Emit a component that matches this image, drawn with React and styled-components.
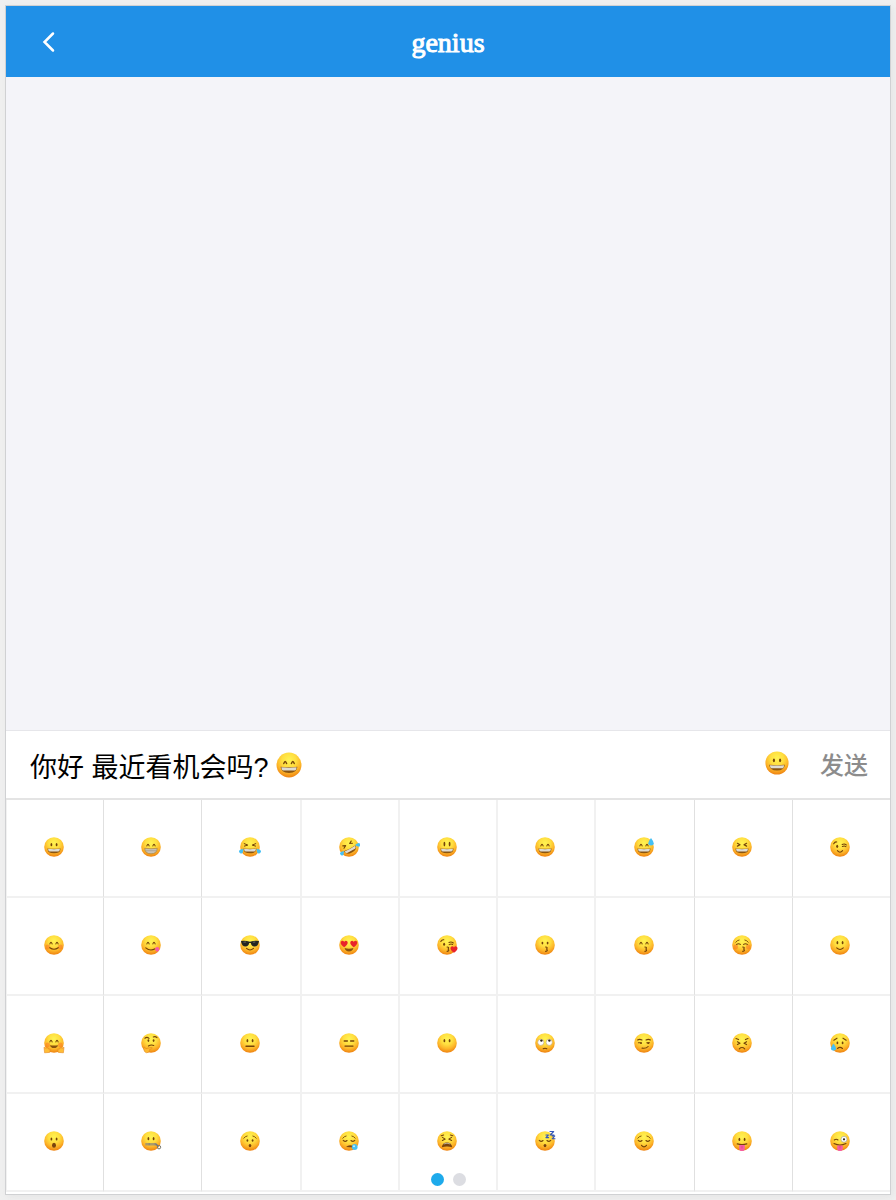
import React, { useState } from "react";
import styled, { createGlobalStyle } from "styled-components";

const GlobalStyle = createGlobalStyle`
  * { box-sizing: border-box; }
  body {
    margin: 0;
    background: #f0f0f0;
    font-family: "Liberation Sans", "Noto Sans CJK SC", sans-serif;
  }
  button, input { font: inherit; }
`;

const Page = styled.div`
  min-height: 100vh;
  padding: 5px;
  display: flex;
`;

const Phone = styled.main`
  flex: 1;
  min-width: 0;
  display: flex;
  flex-direction: column;
  background: #fff;
  border: 1px solid #d0d1d3;
  box-shadow: 2px 2px 8px #e4e4e4;
`;

const Header = styled.header`
  display: grid;
  grid-template-columns: 84px 1fr 84px;
  align-items: center;
  height: 71px;
  background: #2090e7;
  color: #fff;
`;

const BackButton = styled.button`
  display: flex;
  justify-content: center;
  padding: 12px;
  border: 0;
  background: none;
  color: inherit;
  cursor: pointer;
`;

const Title = styled.h1`
  margin: 0;
  padding-top: 2px;
  text-align: center;
  font: 400 28px/32px "Liberation Serif", serif;
  -webkit-text-stroke: 1px #fff;
`;

const Messages = styled.section`
  flex: 1;
  min-height: 120px;
  background: #f4f4f9;
`;

const Composer = styled.form`
  display: flex;
  align-items: center;
  gap: 30px;
  height: 68px;
  padding: 0 22px 0 24px;
  border-top: 1px solid #e6e6ea;
`;

const Draft = styled.div`
  flex: 1;
  min-width: 0;
  display: flex;
  align-items: center;
  gap: 6px;
  overflow: hidden;
`;

const DraftInput = styled.input`
  field-sizing: content;
  min-width: 1px;
  max-width: 100%;
  height: 40px;
  padding: 2px 0 0;
  border: 0;
  outline: 0;
  background: none;
  color: #000;
  font-size: 27px;
  line-height: 36px;
`;

const EmojiToggle = styled.button`
  display: flex;
  padding: 0 0 4px;
  border: 0;
  background: none;
  cursor: pointer;
`;

const SendButton = styled.button`
  padding: 2px 0 0;
  border: 0;
  background: none;
  color: #8c8c8c;
  font-size: 24px;
  font-weight: 500;
  line-height: 32px;
  cursor: pointer;
`;

const Picker = styled.section`
  position: relative;
  padding-bottom: 2px;
  border-top: 2px solid #e4e4e4;
`;

const EmojiGrid = styled.div`
  display: grid;
  grid-template-columns: 97fr 98fr 100fr 98fr 98fr 98fr 99fr 98fr 97fr;
  grid-auto-rows: 98px;
  border-left: 1px solid #f1f1f1;
`;

const EmojiCell = styled.button`
  display: flex;
  align-items: center;
  justify-content: center;
  min-width: 0;
  padding: 0 3px 2px 0;
  border: 0 solid #f1f1f1;
  border-bottom-width: 2px;
  border-right: ${(p) =>
    p.$column === 8 ? "0" : p.$column > 1 && p.$column < 6 ? "2px solid #f1f1f1" : "1px solid #e0e0e0"};
  background: #fff;
  cursor: pointer;
`;

const Dots = styled.div`
  position: absolute;
  left: 0;
  right: 0;
  bottom: 8px;
  display: flex;
  justify-content: center;
  gap: 9px;
  pointer-events: none;
`;

const Dot = styled.button`
  width: 13px;
  height: 13px;
  padding: 0;
  border: 0;
  border-radius: 50%;
  background: ${(p) => (p.$active ? "#1eaaeb" : "#dcdde2")};
  pointer-events: auto;
  cursor: pointer;
`;

const Glyph = styled.svg`
  flex-shrink: 0;
`;

const Defs = styled.svg`
  position: absolute;
`;

const INK = "#754308";
const line = { fill: "none", stroke: INK, strokeWidth: 1.1, strokeLinecap: "round", strokeLinejoin: "round" };
const L = ({ d, w = 1.1, c = INK }) => <path d={d} {...line} strokeWidth={w} stroke={c} />;

const DotEyes = ({ y = -2.3, x = 2.6, ry = 1.6 }) => (
  <g fill={INK}>
    <ellipse cx={-x} cy={y} rx="0.9" ry={ry} />
    <ellipse cx={x} cy={y} rx="0.9" ry={ry} />
  </g>
);
const HappyEyes = () => <L d="M-4.1 -1.1Q-3 -4.3 -1.9 -1.1M1.9 -1.1Q3 -4.3 4.1 -1.1" />;
const Squint = () => <L d="M-4.6 -3.7L-2 -2.3L-4.6 -.9M4.6 -3.7L2 -2.3L4.6 -.9" w={1.2} />;
const ClosedEyes = () => <L d="M-5.8 -.7Q-3.8 1.2 -2 -.5M2 -.5Q3.8 1.2 5.8 -.7" />;
const Brows = () => <L d="M-6.2 -2.8Q-4.8 -4.9 -2.9 -5M6.2 -2.8Q4.8 -4.9 2.9 -5" w={0.9} />;
const Grin = () => (
  <g>
    <path d="M-6.6 1.4Q0 2.2 6.6 1.4Q6.4 6.2 0 6.3Q-6.4 6.2 -6.6 1.4Z" fill="#8b5410" />
    <path d="M-6 1.8Q0 2.5 6 1.8Q5.8 4.4 4.4 4.4H-4.4Q-5.8 4.4 -6 1.8Z" fill="#dedbd2" />
  </g>
);
const Teeth = () => (
  <g>
    <path d="M-6.3 1.3Q0 2.1 6.3 1.3Q5.9 6.8 0 6.8Q-5.9 6.8 -6.3 1.3Z" fill="#c9c2b3" stroke="#a27731" strokeWidth=".6" />
    <path d="M-5.6 3.7H5.6" stroke="#988f7e" strokeWidth=".5" />
  </g>
);
const Smile = ({ w = 3.4, y = 3.4 }) => <L d={`M${-w} ${y}Q0 ${y + 3.2} ${w} ${y}`} />;
const Blush = () => (
  <g fill="#fb6b22" opacity=".45">
    <circle cx="-6.3" cy="2" r="2.4" />
    <circle cx="6.3" cy="2" r="2.4" />
  </g>
);
const Kiss = ({ x = 1.5 }) => (
  <path d={`M${x - 0.9} 2Q${x + 1.6} 2 ${x + 0.1} 4.1Q${x + 2} 5.8 ${x - 0.9} 6.4`} {...line} />
);
const Heart = ({ x, y, s = 1 }) => (
  <path
    transform={`translate(${x} ${y}) scale(${s})`}
    d="M0 3.2C-5 0 -3.4 -3 -1.6 -3C-.6 -3 0 -2 0 -1.6C0 -2 .6 -3 1.6 -3C3.4 -3 5 0 0 3.2Z"
    fill="#e9232b"
  />
);
const Tear = ({ x, y, s = 1, r = 0 }) => (
  <path transform={`translate(${x} ${y}) rotate(${r}) scale(${s})`} d="M0 -3.6Q5 2.8 0 3.1Q-5 2.8 0 -3.6Z" fill="#45c0f5" />
);

const FEATURES = {
  grinning: <><DotEyes /><Grin /></>,
  beaming: <><HappyEyes /><Teeth /></>,
  joy: (
    <><L d="M-5.8 -3.4L-2.2 -1.9L-5.6 -.9M5.8 -3.4L2.2 -1.9L5.6 -.9" w={1} /><Grin />
      <Tear x={-8.5} y={4} s={0.8} r={40} /><Tear x={8.5} y={4} s={0.8} r={-40} /></>
  ),
  rofl: (
    <g transform="rotate(-28)"><L d="M-5 -3.9L-2.3 -2.8L-5 -1.3M4.7 -4.2L2.2 -2.8L4.8 -1.7" /><Grin />
      <Tear x={-8.8} y={2.2} s={0.75} r={65} /><Tear x={8.8} y={2.2} s={0.75} r={-65} /></g>
  ),
  smiley: <><DotEyes y={-2.9} ry={2.3} /><Grin /></>,
  smile: <><HappyEyes /><Grin /></>,
  sweat: <><HappyEyes /><Grin /><Tear x={7} y={-5} s={1.1} /></>,
  laughing: <><Squint /><Grin /></>,
  wink: <><L d="M-6.3 -3.2Q-5 -5.6 -3.3 -5M2.2 -2.6Q4.5 -3.7 6.3 -2.1M2.4 -.5Q4.3 -1.6 5.9 -.4" /><ellipse cx="-2.8" cy="-.7" rx="1" ry="1.6" fill={INK} /><Smile w={2.6} y={3.6} /></>,
  blush: <><Blush /><HappyEyes /><Smile w={4.2} y={2.7} /></>,
  yum: <><HappyEyes /><L d="M-5.2 2.8Q-1 6.6 4.2 3.8" /><path d="M4 3.4Q6.4 .8 8 3Q9.2 5.5 6.2 6.8Q4.6 6.7 4 3.4Z" fill="#f75aa5" /></>,
  cool: <><path d="M-9 -4.1Q-4.5 -4.8 0 -3.3Q4.5 -4.8 9 -4.1Q8.4 1.6 4.3 1.6Q1.4 1.2 .8 -1.9H-.8Q-1.4 1.2 -4.3 1.6Q-8.4 1.6 -9 -4.1Z" fill="#242522" /><path d="M-6.5 -2.8L-3.8 -3M2.9 -2.8L5.3 -3" stroke="#7b7b74" strokeWidth=".8" /><Smile w={3.5} /></>,
  heartEyes: <><Heart x={-4.8} y={-1} s={1.05} /><Heart x={4.8} y={-1} s={1.05} /><path d="M-4.4 3.1Q0 4.2 4.4 3.1Q3.7 6.5 0 6.5Q-3.7 6.5 -4.4 3.1Z" fill="#89530e" /></>,
  blowKiss: <><L d="M-6.2 -3.5Q-5 -5.7 -3.2 -5.2M2 -2.5Q4.2 -3.6 6.3 -2M2.2 -.4Q4 -1.5 5.6 -.6" /><ellipse cx="-2.9" cy="-.7" rx="1" ry="1.5" fill={INK} /><Kiss x={1} /><Heart x={7} y={4.5} s={1.05} /></>,
  kiss: <><DotEyes y={-1.9} ry={1.3} /><Kiss /></>,
  kissSmile: <><HappyEyes /><Kiss x={1.8} /></>,
  kissClosed: <><Blush /><Brows /><L d="M-5.4 -.6Q-3.5 -2 -1.6 -.6M1.6 -.6Q3.5 -2 5.4 -.6" /><Kiss x={1.6} /></>,
  slight: <><DotEyes /><Smile w={3.3} y={2.9} /></>,
  hug: (
    <><Blush /><HappyEyes /><path d="M-4 2.2Q0 3 4 2.2Q3.4 5 0 5Q-3.4 5 -4 2.2Z" fill="#89530e" />
      <g fill="#ffbd36" stroke="#e88a22" strokeWidth=".6"><path d="M-10 4.2L-8 5.6L-6.8 4.3L-5.7 6L-3.8 6.3L-4.3 9.4L-9.4 9.8Z" /><path d="M10 4.2L8 5.6L6.8 4.3L5.7 6L3.8 6.3L4.3 9.4L9.4 9.8Z" /></g></>
  ),
  thinking: <><L d="M-6.1 -4.8Q-4 -6.5 -2 -4.7M2.3 -6Q4.3 -7.1 6 -5.3" /><DotEyes y={-2.4} ry={1.4} /><L d="M-2.6 3Q0 1.4 2.8 2.4" /><path d="M-7.2 4.3Q-5.9 3.7 -5.2 5.7L.8 4.3Q2 4.9 .6 5.8L-1.4 6.5Q-1.1 9.6 -4.2 9.8Q-7.5 9.3 -7.2 4.3Z" fill="#ffb92e" stroke="#df861b" strokeWidth=".6" /></>,
  neutral: <><DotEyes /><L d="M-4 3.2H4" w={1.4} /></>,
  expressionless: <><L d="M-4.8 -2H-1.6M1.6 -2H4.8M-4 3.1H4" w={1.3} /></>,
  noMouth: <DotEyes />,
  rollEyes: <><g fill="#fff" stroke="#b5936a" strokeWidth=".5"><circle cx="-4.2" cy="-.7" r="3.1" /><circle cx="4.2" cy="-.7" r="3.1" /></g><circle cx="-3.6" cy="-2.4" r="1.2" fill="#32251a" /><circle cx="4.4" cy="-2.4" r="1.2" fill="#32251a" /><L d="M-1.8 5.7Q0 4.7 1.8 5.7" /></>,
  smirk: <><L d="M-6.4 -3Q-4.4 -4.3 -2 -3M2 -3Q4.4 -4.3 6.4 -3M-5.6 -.3L-2.7 -.2M2.8 -.2L5.6 -.3" /><circle cx="-3" cy=".2" r=".9" fill={INK} /><circle cx="4.2" cy=".2" r=".9" fill={INK} /><L d="M-2 5.1Q2.2 5.7 4.1 3.5" /></>,
  persevere: <><L d="M-6 -4.4L-3.4 -3.4M6 -4.4L3.4 -3.4M-4.6 -1.3L-2 .2L-4.6 1.6M4.6 -1.3L2 .2L4.6 1.6M-2.7 5.8Q0 3.2 2.7 5.8" /></>,
  sadRelieved: <><L d="M-6.2 -2.8L-3 -4.8M6.2 -2.8L3 -4.8M-2.5 5.5Q0 3.2 2.5 5.5" /><DotEyes y={-0.1} ry={1.3} /><Tear x={-6.5} y={4.4} s={1.05} /></>,
  open: <><DotEyes y={-2} /><ellipse cy="4.2" rx="2" ry="2.5" fill="#7a430d" /></>,
  zipper: <><DotEyes /><path d="M-5.5 3.2H5.5" stroke="#878680" strokeWidth="2.5" strokeDasharray=".9 .3" /><circle cx="8" cy="6.2" r="1.7" fill="none" stroke="#77776f" strokeWidth="1" /><path d="M5 3L7 5.3" stroke="#777" strokeWidth="1.6" /></>,
  hushed: <><Brows /><DotEyes y={-0.5} ry={1.2} /><ellipse cy="4.6" rx="1.3" ry="1.6" fill="#7a430d" /></>,
  sleepy: <><Brows /><ClosedEyes /><path d="M-3 6.1Q0 3.2 4 5V6.6Z" fill="#7a430d" /><circle cx="5.7" cy="6" r="2.9" fill="#49bfef" /><circle cx="5" cy="5.2" r="1" fill="#c5f0ff" /></>,
  tired: <><L d="M-5.8 -5.2L-3.4 -6M5.8 -5.2L3.4 -6M-4.6 -3.6L-1.8 -1.9L-4.6 -.6M4.6 -3.6L1.8 -1.9L4.6 -.6" /><path d="M-5.2 6.2Q-4.6 1.5 0 1.5Q4.6 1.5 5.2 6.2Q0 4.8 -5.2 6.2Z" fill="#7a430d" /><path d="M-3.3 3Q0 1.4 3.3 3" stroke="#bcae98" strokeWidth="1" fill="none" /></>,
  sleeping: <><ClosedEyes /><ellipse cy="4.6" rx="1.4" ry="1.7" fill="#7a430d" /><L c="#3558b9" d="M.9 -6H3.4L.9 -3.4H3.6M5 -9.5H8.7L5.2 -6H9M7.2 -5H9.8L7.2 -2.2H10" /></>,
  relieved: <><Brows /><ClosedEyes /><Smile w={2.5} y={4.3} /></>,
  tongue: <><DotEyes y={-1.6} /><L d="M-4.7 2.9Q0 4.4 4.7 2.9" w={1.5} /><path d="M-2.8 4H2.8V7.4Q2.7 10 0 10Q-2.7 10 -2.8 7.4Z" fill="#f65ca1" /><path d="M0 5V7.5" stroke="#d23c81" strokeWidth=".6" /></>,
  zany: <><L d="M-5.7 -1Q-3.8 -2.4 -2 -1M-6 2.6Q0 5.6 6 2.6" /><circle cx="4" cy="-1.7" r="3" fill="#fff" stroke="#9b948c" strokeWidth=".6" /><circle cx="4" cy="-1.7" r="1.1" fill="#27231e" /><path d="M-2.8 4.5H2.8V7.4Q2.7 10 0 10Q-2.7 10 -2.8 7.4Z" fill="#f65ca1" /><path d="M0 5V7.5" stroke="#d23c81" strokeWidth=".6" /></>,
};

const EMOJI = Object.keys(FEATURES);

function Emoji({ name, size = 22 }) {
  return (
    <Glyph width={size} height={size} viewBox="-11 -11 22 22" aria-hidden="true">
      <circle r="9.8" fill="url(#face)" />
      {FEATURES[name]}
    </Glyph>
  );
}

const FaceGradient = () => (
  <Defs width="0" height="0" aria-hidden="true">
    <radialGradient id="face" cx=".5" cy=".3" r=".7">
      <stop offset="0" stopColor="#fff352" />
      <stop offset=".4" stopColor="#ffdf40" />
      <stop offset=".7" stopColor="#fdb72a" />
      <stop offset="1" stopColor="#ee8110" />
    </radialGradient>
  </Defs>
);

export default function App() {
  const [text, setText] = useState("你好 最近看机会吗?");
  const [added, setAdded] = useState(["smile"]);
  const [open, setOpen] = useState(true);
  const [page, setPage] = useState(0);

  const send = (event) => {
    event.preventDefault();
    setText("");
    setAdded([]);
  };

  return (
    <Page>
      <GlobalStyle />
      <FaceGradient />
      <Phone>
        <Header>
          <BackButton type="button" aria-label="Back">
            <svg width="14" height="22" viewBox="0 0 14 22" fill="none" stroke="currentColor" strokeWidth="2.5" strokeLinecap="round" strokeLinejoin="miter">
              <path d="M12 2.5L3.5 11L12 19.5" />
            </svg>
          </BackButton>
          <Title>genius</Title>
        </Header>
        <Messages />
        <Composer onSubmit={send}>
          <Draft>
            <DraftInput aria-label="Message" value={text} onChange={(e) => setText(e.target.value)} />
            {added.map((name, i) => <Emoji key={i} name={name} size={28} />)}
          </Draft>
          <EmojiToggle type="button" aria-label="Emoji" onClick={() => setOpen(!open)}>
            <Emoji name="grinning" size={26} />
          </EmojiToggle>
          <SendButton type="submit">发送</SendButton>
        </Composer>
        {open && (
          <Picker aria-label="Emoji picker">
            <EmojiGrid>
              {EMOJI.map((name, i) => (
                <EmojiCell key={name} type="button" aria-label={name} $column={i % 9} onClick={() => setAdded([...added, name])}>
                  <Emoji name={name} />
                </EmojiCell>
              ))}
            </EmojiGrid>
            <Dots>
              {[0, 1].map((n) => (
                <Dot key={n} type="button" aria-label={`Page ${n + 1}`} $active={page === n} onClick={() => setPage(n)} />
              ))}
            </Dots>
          </Picker>
        )}
      </Phone>
    </Page>
  );
}
